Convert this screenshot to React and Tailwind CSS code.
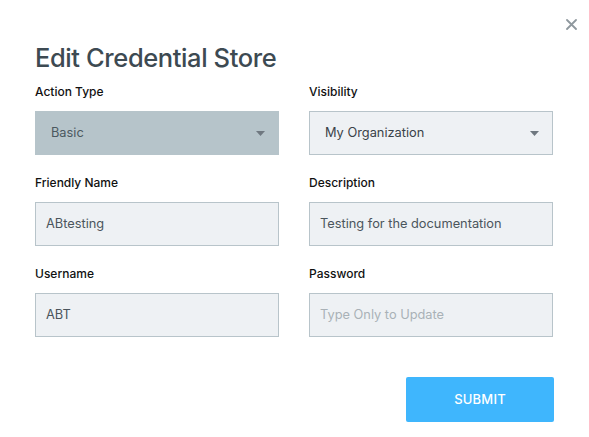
import React from "react";

function Caret() {
  return (
    <svg width="9" height="5" viewBox="0 0 9 5" className="shrink-0">
      <path d="M0 0 L9 0 L4.5 5 Z" fill="#6f7880" />
    </svg>
  );
}

function Field({ label, children }) {
  return (
    <div className="flex flex-col">
      <div className="text-[12px] font-medium text-[#111] leading-[16px] h-[16px] mb-[11px]">{label}</div>
      {children}
    </div>
  );
}

function Box({ children, className = "" }) {
  return (
    <div className={"h-[44px] flex items-center text-[12.8px] " + className}>{children}</div>
  );
}

export default function App() {
  return (
    <div className="w-[589px] h-[437px] bg-white relative" style={{ fontFamily: "Inter, 'Noto Sans', sans-serif" }}>
      <button className="absolute left-[566px] top-[19px] w-[11px] h-[11px]" aria-label="close">
        <svg width="11" height="11" viewBox="0 0 11 11">
          <path d="M1 1 L10 10 M10 1 L1 10" stroke="#8f989e" strokeWidth="1.8" strokeLinecap="round" />
        </svg>
      </button>
      <div className="pt-[41px] px-[35px]">
        <h1 className="text-[25.5px] font-medium text-[#3d4a52] leading-[34px] tracking-[-0.4px]">Edit Credential Store</h1>
        <div className="grid grid-cols-[244px_244px] gap-x-[30px] gap-y-[20px] mt-[9px]">
          <Field label="Action Type">
            <Box className="bg-[#b6c4ca] text-[#4b5860] justify-between pl-[16px] pr-[14px]">
              <span>Basic</span>
              <Caret />
            </Box>
          </Field>
          <Field label="Visibility">
            <Box className="bg-[#eef1f4] border border-[#b8c4ca] text-[#3a4248] justify-between pl-[15px] pr-[13px]">
              <span>My Organization</span>
              <Caret />
            </Box>
          </Field>
          <Field label="Friendly Name">
            <Box className="bg-[#eef1f4] border border-[#b8c4ca] text-[#4b555c] px-[10px]">ABtesting</Box>
          </Field>
          <Field label="Description">
            <Box className="bg-[#eef1f4] border border-[#b8c4ca] text-[#4b555c] px-[10px]">Testing for the documentation</Box>
          </Field>
          <Field label="Username">
            <Box className="bg-[#eef1f4] border border-[#b8c4ca] text-[#4b555c] px-[10px]">ABT</Box>
          </Field>
          <Field label="Password">
            <Box className="bg-[#eef1f4] border border-[#b8c4ca] text-[#a9b1b7] px-[10px]">Type Only to Update</Box>
          </Field>
        </div>
        <div className="flex justify-end mt-[40px]">
          <button className="w-[148px] h-[45px] bg-[#3fb6fd] text-white text-[13px] font-medium rounded-[2px] tracking-[0.2px]">SUBMIT</button>
        </div>
      </div>
    </div>
  );
}
